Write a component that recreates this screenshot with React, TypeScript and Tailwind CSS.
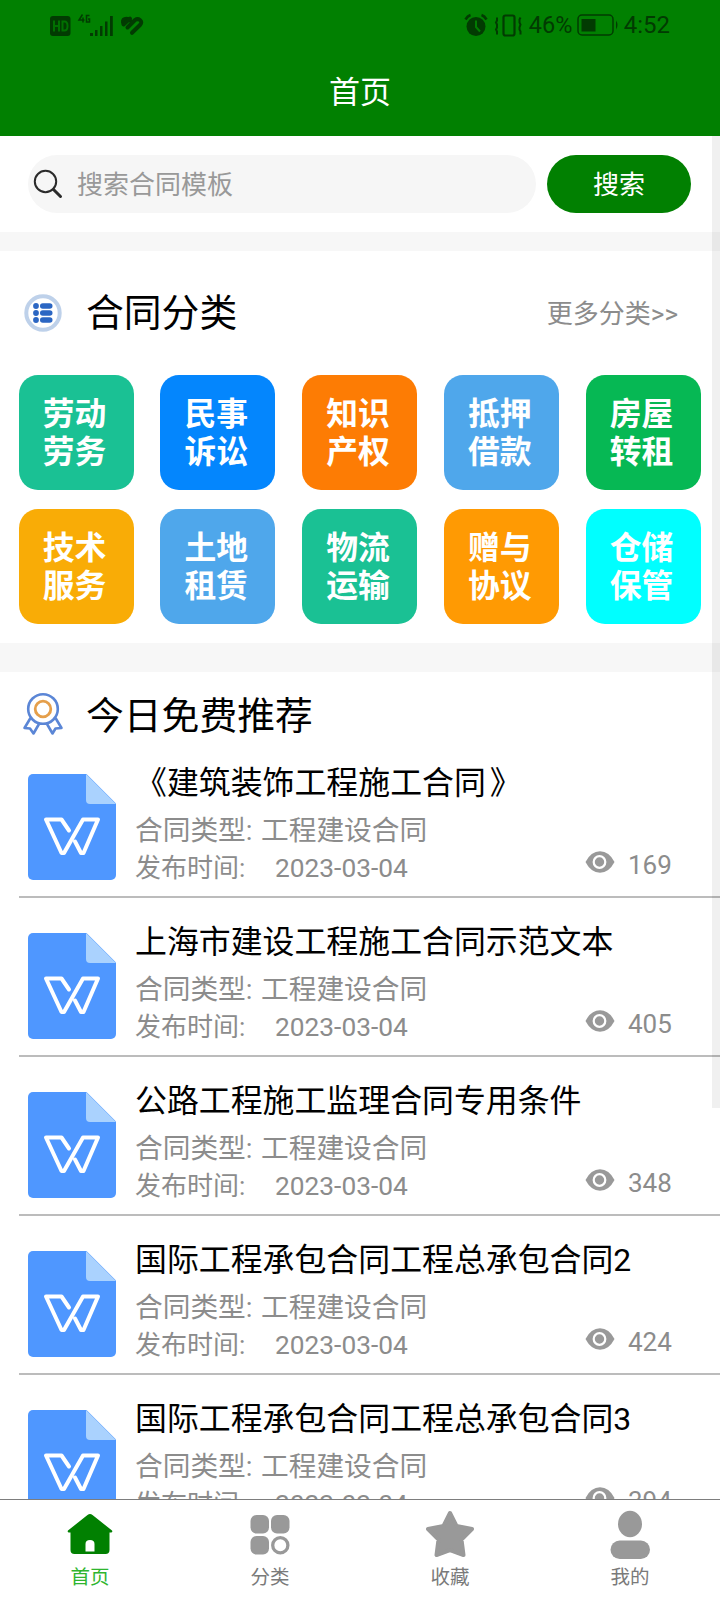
const FONT = "font-[Roboto,'Noto_Sans_CJK_SC',sans-serif]";

const categories = [
  { top: '劳动', bottom: '劳务', color: 'bg-[#1ac194]' },
  { top: '民事', bottom: '诉讼', color: 'bg-[#0486fd]' },
  { top: '知识', bottom: '产权', color: 'bg-[#fd7c04]' },
  { top: '抵押', bottom: '借款', color: 'bg-[#4fa7eb]' },
  { top: '房屋', bottom: '转租', color: 'bg-[#06b854]' },
  { top: '技术', bottom: '服务', color: 'bg-[#f9ac06]' },
  { top: '土地', bottom: '租赁', color: 'bg-[#4fa7eb]' },
  { top: '物流', bottom: '运输', color: 'bg-[#1ac194]' },
  { top: '赠与', bottom: '协议', color: 'bg-[#ff9a03]' },
  { top: '仓储', bottom: '保管', color: 'bg-[#00ffff]' },
];

const contracts = [
  { title: '《建筑装饰工程施工合同》', views: 169 },
  { title: '上海市建设工程施工合同示范文本', views: 405 },
  { title: '公路工程施工监理合同专用条件', views: 348 },
  { title: '国际工程承包合同工程总承包合同2', views: 424 },
  { title: '国际工程承包合同工程总承包合同3', views: 394 },
];

function StatusBar() {
  return (
    <div className="flex h-[50px] items-center justify-between pl-[50px] pr-[50px] text-[#023b02]">
      <svg width="96" height="24" viewBox="0 0 96 24" fill="currentColor" className="mt-[-1px]">
        <rect x="0" y="3" width="20.500" height="20" rx="3" />
        <g stroke="#017001" strokeWidth="2" fill="none">
          <path d="M4 7.500v11M9 7.500v11M4 13h5M12.500 8.500h2q3 0 3 4.500t-3 4.500h-2z" />
        </g>
        <g stroke="currentColor" strokeWidth="1.500" fill="none">
          <path d="M32.500 1.500L29 7h5.500M33 4.500v5M39.500 2.500h-3v6.500h3v-3h-1.500" />
        </g>
        <path d="M40 20h3v3h-3zM45 17h2.500v6H45zM50 13h2.500v10H50zM55 8.500h2.500V23H55zM60 3h2.800v20H60z" />
        <g fill="none" stroke="currentColor" strokeLinecap="round" strokeLinejoin="round">
          <path d="M73 9.500q-.5-3.700 3.500-3.700 2 0 3.500 1.500" strokeWidth="4" />
          <path d="M73.500 11.500l6.500-6" strokeWidth="4" />
          <path d="M77.500 14.500l7.500-7.500q2.500-1.800 5 0t0 5L82 19.800" strokeWidth="4" />
        </g>
      </svg>
      <div className="flex items-center">
        <svg width="60" height="26" viewBox="-1 0 60 26" fill="none" stroke="currentColor" className="mr-[6px]">
          <circle cx="12" cy="14.500" r="9.500" fill="currentColor" stroke="none" />
          <path d="M1.500 7.500q2-3.500 5-4.500M22.500 7.500q-2-3.500-5-4.500" strokeWidth="2.600" />
          <path d="M12 8.500V15l4 4.500" stroke="#017c01" strokeWidth="2" />
          <path d="M33 5.500v3l-1 2 1 2v3l-1 2 1 2v3M56.500 5.500l-1 2v3l1 2-1 3v2l1 2v3" strokeWidth="2" />
          <rect x="39.500" y="3.500" width="11" height="20" rx="2" strokeWidth="2.200" />
        </svg>
        <span className="w-[48px] whitespace-nowrap text-[23.500px] leading-[26px]">46%</span>
        <svg width="42" height="24" viewBox="0 0 42 24" className="mr-[5px]">
          <rect x="1" y="2" width="35" height="20" rx="4" fill="none" stroke="currentColor" strokeWidth="1.500" />
          <rect x="4.500" y="6" width="14" height="12.500" fill="currentColor" />
          <path d="M39 7.500q3 4.500 0 9z" fill="currentColor" />
        </svg>
        <span className="whitespace-nowrap text-[24px] leading-[26px]">4:52</span>
      </div>
    </div>
  );
}

function SearchRow() {
  return (
    <div className="flex h-24 shrink-0 items-start pl-7 pt-[19px]">
      <div className="flex h-[58px] w-[508px] items-center rounded-full bg-[#f6f6f6] pl-[5px]">
        <svg width="30" height="30" viewBox="0 0 30 30" fill="none" stroke="#2b2b2b">
          <circle cx="12.500" cy="12.500" r="10.700" strokeWidth="2" />
          <path d="M20.500 20.500l7 7" strokeWidth="3" strokeLinecap="round" />
        </svg>
        <span className="ml-[14px] mt-[2px] text-[26px] leading-[38px] text-[#999]">搜索合同模板</span>
      </div>
      <button className="ml-[11px] h-[58px] w-36 rounded-full bg-[#018001] pt-[2px] text-[26px] leading-[38px] text-white">
        搜索
      </button>
    </div>
  );
}

function ListIcon() {
  return (
    <svg width="38" height="38" viewBox="0 0 38 38">
      <circle cx="19" cy="19" r="16.700" fill="#fff" stroke="#bed1ea" strokeWidth="4" />
      <g fill="#2b66c3">
        <circle cx="12" cy="12" r="2.900" />
        <circle cx="12" cy="19" r="2.900" />
        <circle cx="12" cy="26" r="2.900" />
        <rect x="16" y="9.200" width="12.500" height="5.600" rx="2.800" />
        <rect x="16" y="16.200" width="12.500" height="5.600" rx="2.800" />
        <rect x="16" y="23.200" width="12.500" height="5.600" rx="2.800" />
      </g>
    </svg>
  );
}

function MedalIcon() {
  return (
    <svg width="42" height="44" viewBox="0 0 42 44" fill="none" strokeLinejoin="round">
      <g stroke="#5b86d6" strokeWidth="2.600">
        <path d="M8.500 26L2.500 36l5.500.5 3.500 5 5.500-9.500M33.500 26l6 10-6 .5-3 5-5.500-9.500" />
        <circle cx="21" cy="17" r="14.800" fill="#fff" />
      </g>
      <circle cx="21" cy="17" r="7.800" stroke="#e59f4b" strokeWidth="2.800" />
    </svg>
  );
}

function DocIcon() {
  return (
    <svg width="88" height="106" viewBox="0 0 88 106" className="shrink-0">
      <path d="M5 0h53.500L88 29.500V101a5 5 0 0 1-5 5H5a5 5 0 0 1-5-5V5a5 5 0 0 1 5-5z" fill="#4f97ff" />
      <path d="M58 0l30 30H62a4 4 0 0 1-4-4z" fill="#aad2fe" />
      <path
        d="M41 56.500l-7.500-11H18L33.500 79h2.500L55 45.500h15L55.500 79H53l-6-11.500"
        fill="none"
        stroke="#fff"
        strokeWidth="4"
        strokeLinejoin="round"
        strokeLinecap="round"
      />
    </svg>
  );
}

function EyeIcon() {
  return (
    <svg width="30" height="22" viewBox="0 0 30 22">
      <path d="M.5 11Q6 .3 15 .3T29.500 11Q24 21.700 15 21.700T.5 11z" fill="#999" />
      <circle cx="14.500" cy="11" r="5.800" fill="#999" stroke="#fff" strokeWidth="2.200" />
    </svg>
  );
}

function ContractTitle({ text }: { text: string }) {
  const quoted = text.endsWith('》');
  return (
    <div className="ml-[-1px] h-12 text-[31.900px] leading-[48px] text-black">
      {quoted ? text.slice(0, -1) : text}
      {quoted && <span className="ml-[4px]">》</span>}
    </div>
  );
}

function ContractRow({ title, views }: { title: string; views: number }) {
  return (
    <div className="ml-[19px] flex h-[159px] shrink-0 border-b-2 border-[#bcbcbc] pl-[9px] pt-[35px]">
      <DocIcon />
      <div className="ml-5 mt-[-15px] flex flex-1 flex-col whitespace-nowrap text-[#8c8c8c]">
        <ContractTitle text={title} />
        <div className="ml-[-1px] mt-px flex h-[46px] text-[27.700px] leading-[46px]">
          <span className="w-[126px]">合同类型:</span>
          <span>工程建设合同</span>
        </div>
        <div className="ml-[-1px] mt-[-5px] flex h-[38px] text-[26px] leading-[38px]">
          <span className="w-[140px]">发布时间:</span>
          <span className="w-[310px] text-[26.300px]">2023-03-04</span>
          <span className="mt-[2px]">
            <EyeIcon />
          </span>
          <span className="ml-[13px] mt-[-3px]">{views}</span>
        </div>
      </div>
    </div>
  );
}

function HomeIcon() {
  return (
    <svg width="48" height="50" viewBox="0 0 48 50">
      <path
        d="M21.500 5q2.500-2 5 0L46 20.500q1 1.500-1 2h-1.500V40q0 4-4 4h-31q-4 0-4-4V22.500H3q-2-.5-1-2zM19.500 41.500h9V34q0-4-4.500-4t-4.500 4z"
        fill="#018001"
        fillRule="evenodd"
      />
    </svg>
  );
}

function GridIcon() {
  return (
    <svg width="48" height="50" viewBox="0 0 48 50" fill="#999">
      <rect x="4.500" y="5" width="18.500" height="18.500" rx="6" />
      <rect x="25" y="5" width="18.500" height="18.500" rx="6" />
      <rect x="4.500" y="26" width="18.500" height="18.500" rx="6" />
      <circle cx="34.300" cy="35.200" r="7.600" fill="none" stroke="#999" strokeWidth="3.300" />
    </svg>
  );
}

function StarIcon() {
  return (
    <svg width="48" height="50" viewBox="0 0 48 50">
      <path
        d="M24 3l6.500 13 15.500 3-10.500 10.500 2 15.500L24 40 10.500 45l2-15.500L2 19l15.500-3z"
        fill="#999"
        stroke="#999"
        strokeWidth="4"
        strokeLinejoin="round"
      />
    </svg>
  );
}

function UserIcon() {
  return (
    <svg width="48" height="50" viewBox="0 0 48 50" fill="#999">
      <ellipse cx="24" cy="14" rx="12" ry="13.200" />
      <rect x="4.500" y="30.500" width="39.500" height="18.500" rx="9.200" />
    </svg>
  );
}

const tabs = [
  { label: '首页', Icon: HomeIcon, color: 'text-[#2fb52f]' },
  { label: '分类', Icon: GridIcon, color: 'text-[#7a7a7a]' },
  { label: '收藏', Icon: StarIcon, color: 'text-[#7a7a7a]' },
  { label: '我的', Icon: UserIcon, color: 'text-[#7a7a7a]' },
];

export default function App() {
  return (
    <div className={`relative flex h-[1600px] w-[720px] flex-col overflow-hidden bg-white ${FONT}`}>
      <header className="h-[136px] shrink-0 bg-[#018001]">
        <StatusBar />
        <h1 className="mt-[19px] text-center text-[31px] leading-[48px] text-white">首页</h1>
      </header>
      <main className="flex min-h-0 flex-1 flex-col overflow-hidden">
        <SearchRow />
        <div className="h-[19px] shrink-0 bg-[#f7f7f7]" />
        <section className="h-[392px] shrink-0">
          <div className="flex h-[124px] items-center pl-6 pr-[42px]">
            <ListIcon />
            <h2 className="ml-6 flex-1 text-[37.800px] leading-[56px] text-black">合同分类</h2>
            <span className="mt-[2px] text-[26px] leading-[38px] text-[#8c8c8c]">更多分类&gt;&gt;</span>
          </div>
          <div className="grid grid-cols-[repeat(5,115px)] justify-between gap-y-[19px] pl-[18.600px] pr-[19.400px]">
            {categories.map((c) => (
              <div
                key={c.top}
                className={`flex h-[115px] flex-col items-center justify-center rounded-[19px] pr-[3px] text-[31.800px] font-bold leading-[38px] text-white ${c.color}`}
              >
                <span>{c.top}</span>
                <span>{c.bottom}</span>
              </div>
            ))}
          </div>
        </section>
        <div className="h-[29px] shrink-0 bg-[#f7f7f7]" />
        <div className="flex h-[67px] shrink-0 items-start pl-[22px] pt-5">
          <MedalIcon />
          <h2 className="ml-[22px] mt-[-4px] text-[37.800px] leading-[56px] text-black">今日免费推荐</h2>
        </div>
        {contracts.map((c) => (
          <ContractRow key={c.title} {...c} />
        ))}
      </main>
      <nav className="grid h-[101px] shrink-0 grid-cols-4 border-t border-[#7d7d7d] bg-white">
        {tabs.map(({ label, Icon, color }) => (
          <div key={label} className="flex flex-col items-center pt-[10px]">
            <Icon />
            <span className={`mt-[4px] text-[19.500px] leading-[28px] ${color}`}>{label}</span>
          </div>
        ))}
      </nav>
      <div className="absolute right-0 top-[136px] h-[972px] w-2 bg-black/6" />
    </div>
  );
}
